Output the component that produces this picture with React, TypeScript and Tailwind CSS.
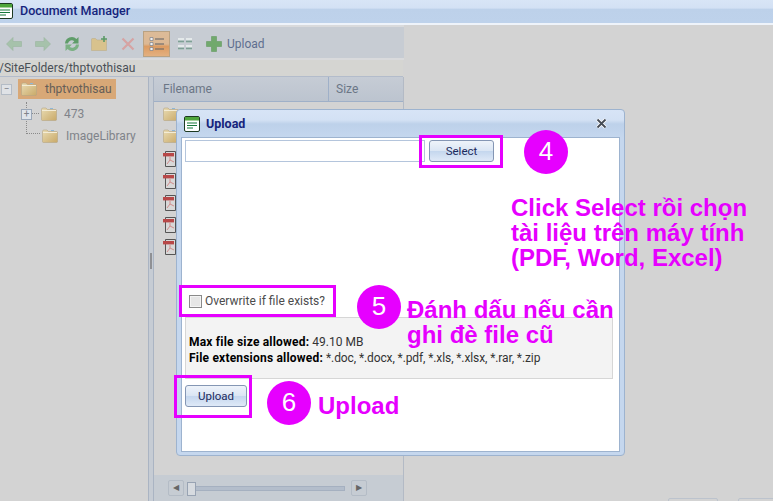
import React from "react";

const UI_FONT = "font-['Roboto',sans-serif]";

// Small green "window" glyph used in both title bars
const WindowIcon = () => (
  <svg width="16" height="16" viewBox="0 0 16 16" className="shrink-0">
    <rect x="0.5" y="0.5" width="15" height="15" rx="1.5" fill="#fff" stroke="#1d3a22" />
    <rect x="1" y="1" width="14" height="3.5" fill="#4fa63c" />
    <path d="M3 7h10M3 9.500h10M3 12h6" stroke="#16793a" strokeWidth="1.1" />
  </svg>
);

const Folder = () => (
  <svg width="16" height="14" viewBox="0 0 16 14" className="shrink-0">
    <defs>
      <linearGradient id="fold" x1="0" y1="0" x2="1" y2="1">
        <stop offset="0" stopColor="#e9dcb4" />
        <stop offset="1" stopColor="#c9a968" />
      </linearGradient>
    </defs>
    <path d="M0.500 2.500q0-1.500 1.500-1.500h3l1.500 1.500h8q1 0 1 1v9q0 1-1 1h-13q-1 0-1-1z" fill="url(#fold)" stroke="#b5a684" strokeWidth="0.6" />
    <path d="M1 3.500h14" stroke="#f3ecd6" />
    <path d="M9 1.500h3" stroke="#8fb7d6" />
  </svg>
);

const PdfIcon = () => (
  <svg width="14" height="16" viewBox="0 0 14 16" className="shrink-0">
    <path d="M2.500 0.500h10v15h-10z" fill="#d8d8d8" stroke="#555" />
    <rect x="0" y="2" width="11" height="3.400" fill="#b84848" />
    <path d="M7 6v3l-3 4M7 9l4 2" stroke="#d28c8c" fill="none" />
  </svg>
);

const ToolbarIcons = () => (
  <>
    <svg width="16" height="14" viewBox="0 0 16 14" className="ml-[6px]">
      <path d="M0.500 7l6.500-6.500V4.500h8.500v5H7v4z" fill="#a6c2ab" stroke="#9ab59f" strokeWidth="0.6" />
    </svg>
    <svg width="16" height="14" viewBox="0 0 16 14" className="ml-[13px]">
      <path d="M15.500 7L9 0.500V4.500H0.500v5H9v4z" fill="#a6c2ab" stroke="#9ab59f" strokeWidth="0.6" />
    </svg>
    <svg width="16" height="16" viewBox="0 0 16 16" className="ml-[13px]">
      <path d="M1 7.500A6.800 6.800 0 0 1 12.500 3L14.500 1v6.500H8l2.300-2.300A3.800 3.800 0 0 0 4 7.500z" fill="#5f9d69" />
      <path d="M15 8.500A6.800 6.800 0 0 1 3.500 13L1.500 15V8.500H8l-2.300 2.300A3.800 3.800 0 0 0 12 8.500z" fill="#7cb184" />
    </svg>
    <svg width="17" height="15" viewBox="0 0 17 15" className="ml-[11px]">
      <path d="M0.500 3.500q0-1 1-1h3l1.500 1.500h9.500v10.500h-15z" fill="#d8c28d" stroke="#bcae8b" strokeWidth="0.6" />
      <path d="M13 0v6M10 3h6" stroke="#5b9a66" strokeWidth="1.600" />
    </svg>
    <svg width="14" height="14" viewBox="0 0 14 14" className="ml-[13px]">
      <path d="M1.500 1.500l11 11M12.500 1.500l-11 11" stroke="#d6a3a3" strokeWidth="2.200" />
    </svg>
    <div className="ml-[8px] w-[27px] h-[26px] flex items-center justify-center border border-[#b9a283] bg-[linear-gradient(#dcbb98_0%,#dcb894_50%,#dc9b62_60%,#e3b080_100%)]">
      <svg width="16" height="16" viewBox="0 0 16 16">
        <path d="M6 3h9M6 8h9M6 13h9" stroke="#5d6066" strokeWidth="1.200" />
        <path d="M1 1.500h3v3H1zM1 6.500h3v3H1zM1 11.500h3v3H1z" fill="#f0f2f4" stroke="#6d7480" strokeWidth="0.6" />
      </svg>
    </div>
    <svg width="16" height="16" viewBox="0 0 16 16" className="ml-[7px]">
      <path d="M1 2h6v5H1zM9 2h6v5H9zM1 9h6v5H1zM9 9h6v5H9z" fill="#e4e9ea" />
      <path d="M1 5.500h6M9 5.500h6M1 12.500h6M9 12.500h6" stroke="#7f9f96" strokeWidth="1.800" />
    </svg>
    <svg width="16" height="16" viewBox="0 0 16 16" className="ml-[13px]">
      <path d="M5.500 0.500h5v5h5v5h-5v5h-5v-5h-5v-5h5z" fill="#71a96d" stroke="#659a62" strokeWidth="0.6" />
    </svg>
    <span className="ml-[5px] text-[12px] text-[#5f6f8f]">Upload</span>
  </>
);

const Callout = ({ n, className }: { n: string; className: string }) => (
  <div className={`absolute w-11 h-11 rounded-full bg-[#e600ff] flex items-center justify-center text-white text-[26px] font-['Liberation_Sans',sans-serif] leading-none pb-[3px] ${className}`}>
    {n}
  </div>
);

const Note = ({ className, children }: { className: string; children: React.ReactNode }) => (
  <div className={`absolute text-[#e600ff] font-bold font-['Liberation_Sans',sans-serif] text-[24px] leading-[25px] whitespace-nowrap ${className}`}>
    {children}
  </div>
);

const Highlight = ({ className }: { className: string }) => (
  <div className={`absolute border-[3px] border-[#e600ff] ${className}`} />
);

const DialogButton = ({ label, className }: { label: string; className: string }) => (
  <button className={`h-[22px] rounded-[3px] border border-[#8496b4] bg-[linear-gradient(#eef3fa_0%,#dbe6f4_48%,#c5d7ee_52%,#dfe9f7_100%)] text-[11.500px] pt-[1px] text-[#1b2a5c] ${className}`}>
    {label}
  </button>
);

export default function App() {
  return (
    <div className={`relative w-[773px] h-[501px] overflow-hidden bg-[#d3d3d3] flex flex-col ${UI_FONT}`}>
      {/* title bar */}
      <div className="h-[25px] shrink-0 flex items-center gap-[7px] -ml-[3px] pb-[1px] bg-[linear-gradient(#d8e5f6_0%,#d3e1f4_35%,#bdd1ea_40%,#bed2eb_100%)] border-b-2 border-[#eef3fa]">
        <WindowIcon />
        <span className="text-[12.500px] font-medium text-[#15247c]">Document Manager</span>
      </div>

      {/* toolbar */}
      <div className="h-[35px] shrink-0 flex items-center w-[404px] pt-[2px] bg-[#c7ccd3] border-y-2 border-[#d9dadc]">
        <ToolbarIcons />
      </div>

      {/* path */}
      <div className="h-[17px] shrink-0 w-[404px] -ml-[1px] bg-[#d5d5d2] text-[12px] leading-[16px] text-[#4a5056] whitespace-nowrap border-b border-[#b3bccb]">
        /SiteFolders/thptvothisau
      </div>

      {/* main area */}
      <div className="flex flex-1 min-h-0">
        <div className="relative w-[148px] shrink-0 pt-[2px] text-[12px] text-[#80838a]">
          <div className="flex items-center h-[20px]">
            <span className="ml-[1px] w-[11px] h-[11px] border border-[#b4bcc6] bg-[#dfe2e6] flex items-center justify-center text-[10px] leading-none">−</span>
            <div className="ml-[6px] h-[20px] w-[98px] flex items-center gap-[8px] pl-[3px] bg-[#d8a877] text-[#655e58]">
              <Folder />
              thptvothisau
            </div>
          </div>
          <div className="flex items-center h-[22px] mt-[4px] pl-[21px]">
            <span className="relative z-10 w-[11px] h-[11px] border border-[#9aa7b8] bg-[#dfe4ea] flex items-center justify-center text-[10px] leading-none mr-[9px]">+</span>
            <Folder />
            <span className="ml-[7px]">473</span>
          </div>
          <div className="flex items-center h-[22px] pl-[42px]">
            <Folder />
            <span className="ml-[8px]">ImageLibrary</span>
          </div>
          {/* tree connector lines */}
          <div className="absolute left-[26px] top-[25px] h-[32px] w-[14px] border-l border-b border-dotted border-[#8a8a8a]" />
          <div className="absolute left-[32px] top-[36px] w-[7px] border-t border-dotted border-[#8a8a8a]" />
        </div>

        {/* splitter */}
        <div className="w-[6px] shrink-0 bg-[#c6ccd4] border-x border-[#aab4c3] flex items-center justify-center pb-[56px]">
          <div className="w-[2px] h-[16px] bg-[radial-gradient(#8f9094_1px,transparent_1px)] bg-size-[2px_3px]" />
        </div>

        {/* file list */}
        <div className="w-[250px] shrink-0 flex flex-col border-r border-[#b3bac5]">
          <div className="h-[25px] shrink-0 flex items-center text-[12px] text-[#6b7686] bg-[linear-gradient(#c6ccd5,#bcc4cf)] border-b border-[#9fb0c8]">
            <span className="w-[175px] pl-[9px] border-r border-[#9fb0c8] h-full flex items-center">Filename</span>
            <span className="pl-[7px]">Size</span>
          </div>
          <div className="flex-1 flex flex-col pl-[9px] pt-[5px] gap-[6px]">
            <Folder />
            <div className="mt-[2px]"><Folder /></div>
            <div className="mt-[2px]"><PdfIcon /></div>
            <PdfIcon />
            <PdfIcon />
            <PdfIcon />
            <PdfIcon />
          </div>
          {/* horizontal scroller */}
          <div className="h-[26px] shrink-0 mt-auto flex items-center gap-[2px] pl-[14px] bg-[#c6ccd3]">
            <div className="w-[16px] h-[16px] rounded-[2px] border border-[#b4bcc6] text-[8px] leading-[14px] text-center text-[#666]">◀</div>
            <div className="relative w-[158px] h-[5px] ml-[1px] bg-[#b3bdcb] border border-[#a5b0c0]">
              <div className="absolute -left-[1px] -top-[5px] w-[9px] h-[14px] bg-[#d7dbe0] border border-[#98a3b3]" />
            </div>
            <div className="w-[16px] h-[16px] ml-[4px] rounded-[2px] border border-[#b4bcc6] text-[8px] leading-[14px] text-center text-[#666]">▶</div>
          </div>
        </div>
      </div>

      {/* disabled buttons peeking in at the bottom right */}
      <div className="absolute left-[668px] top-[498px] w-[50px] h-[6px] rounded-[2px] border border-[#bcc3cd]" />
      <div className="absolute left-[738px] top-[498px] w-[50px] h-[6px] rounded-[2px] border border-[#bcc3cd]" />

      {/* upload dialog */}
      <div className="absolute left-[176px] top-[109px] w-[449px] h-[347px] rounded-[4px] border border-[#9db3cf] bg-[linear-gradient(#d7e4f6_0px,#d3e1f4_10px,#bdd1ea_14px,#c5d7ee_28px,#c5d7ee_100%)] flex flex-col px-[4px] pb-[3px]">
        <div className="h-[27px] shrink-0 flex items-center justify-between pl-[3px] pr-[13px]">
          <div className="flex items-center gap-[6px]">
            <WindowIcon />
            <span className="text-[12.500px] font-bold text-[#15247c] pt-[2px]">Upload</span>
          </div>
          <svg width="11" height="11" viewBox="0 0 11 11">
            <path d="M1.500 1.500l8 8M9.500 1.500l-8 8" stroke="#fff" strokeWidth="3.500" />
            <path d="M1.500 1.500l8 8M9.500 1.500l-8 8" stroke="#444b55" strokeWidth="1.800" />
          </svg>
        </div>
        <div className="flex-1 min-h-0 bg-white border border-[#9db3cf] flex flex-col px-[3px] pt-[2px]">
          <div className="flex gap-[4px]">
            <div className="w-[240px] h-[22px] border border-[#b4c5dc] bg-white" />
            <DialogButton label="Select" className="w-[65px]" />
          </div>
          <label className="flex items-center gap-[3px] mt-[128px] h-[22px] pl-[4px] text-[12px] text-[#4c4c4c]">
            <span className="w-[13px] h-[13px] border border-[#8a8a8a] bg-[#e6e6e6] shadow-[inset_0_0_0_1px_#f4f4f4]" />
            Overwrite if file exists?
          </label>
          <div className="mt-[5px] w-[428px] h-[62px] bg-[#f3f3f3] border border-[#d6d6d6] pl-[3px] pt-[16px] text-[12px] leading-[16px] text-[#333]">
            <div><b className="text-black tracking-[0.2px]">Max file size allowed:</b> 49.10 MB</div>
            <div><b className="text-black tracking-[0.2px]">File extensions allowed:</b> <span className="tracking-[-0.1px]">*.doc, *.docx, *.pdf, *.xls, *.xlsx, *.rar, *.zip</span></div>
          </div>
          <DialogButton label="Upload" className="w-[62px] mt-[6px]" />
        </div>
      </div>

      {/* tutorial annotations */}
      <Highlight className="left-[419px] top-[135px] w-[84px] h-[33px]" />
      <Highlight className="left-[179px] top-[285px] w-[157px] h-[32px]" />
      <Highlight className="left-[174px] top-[375px] w-[78px] h-[43px]" />
      <Callout n="4" className="left-[524px] top-[130px]" />
      <Callout n="5" className="left-[357px] top-[285px]" />
      <Callout n="6" className="left-[267px] top-[381px]" />
      <Note className="left-[511px] top-[195px]">
        Click Select rồi chọn<br />tài liệu trên máy tính<br />(PDF, Word, Excel)
      </Note>
      <Note className="left-[407px] top-[297px]">
        Đánh dấu nếu cần<br />ghi đè file cũ
      </Note>
      <Note className="left-[318px] top-[393px]">Upload</Note>
    </div>
  );
}
